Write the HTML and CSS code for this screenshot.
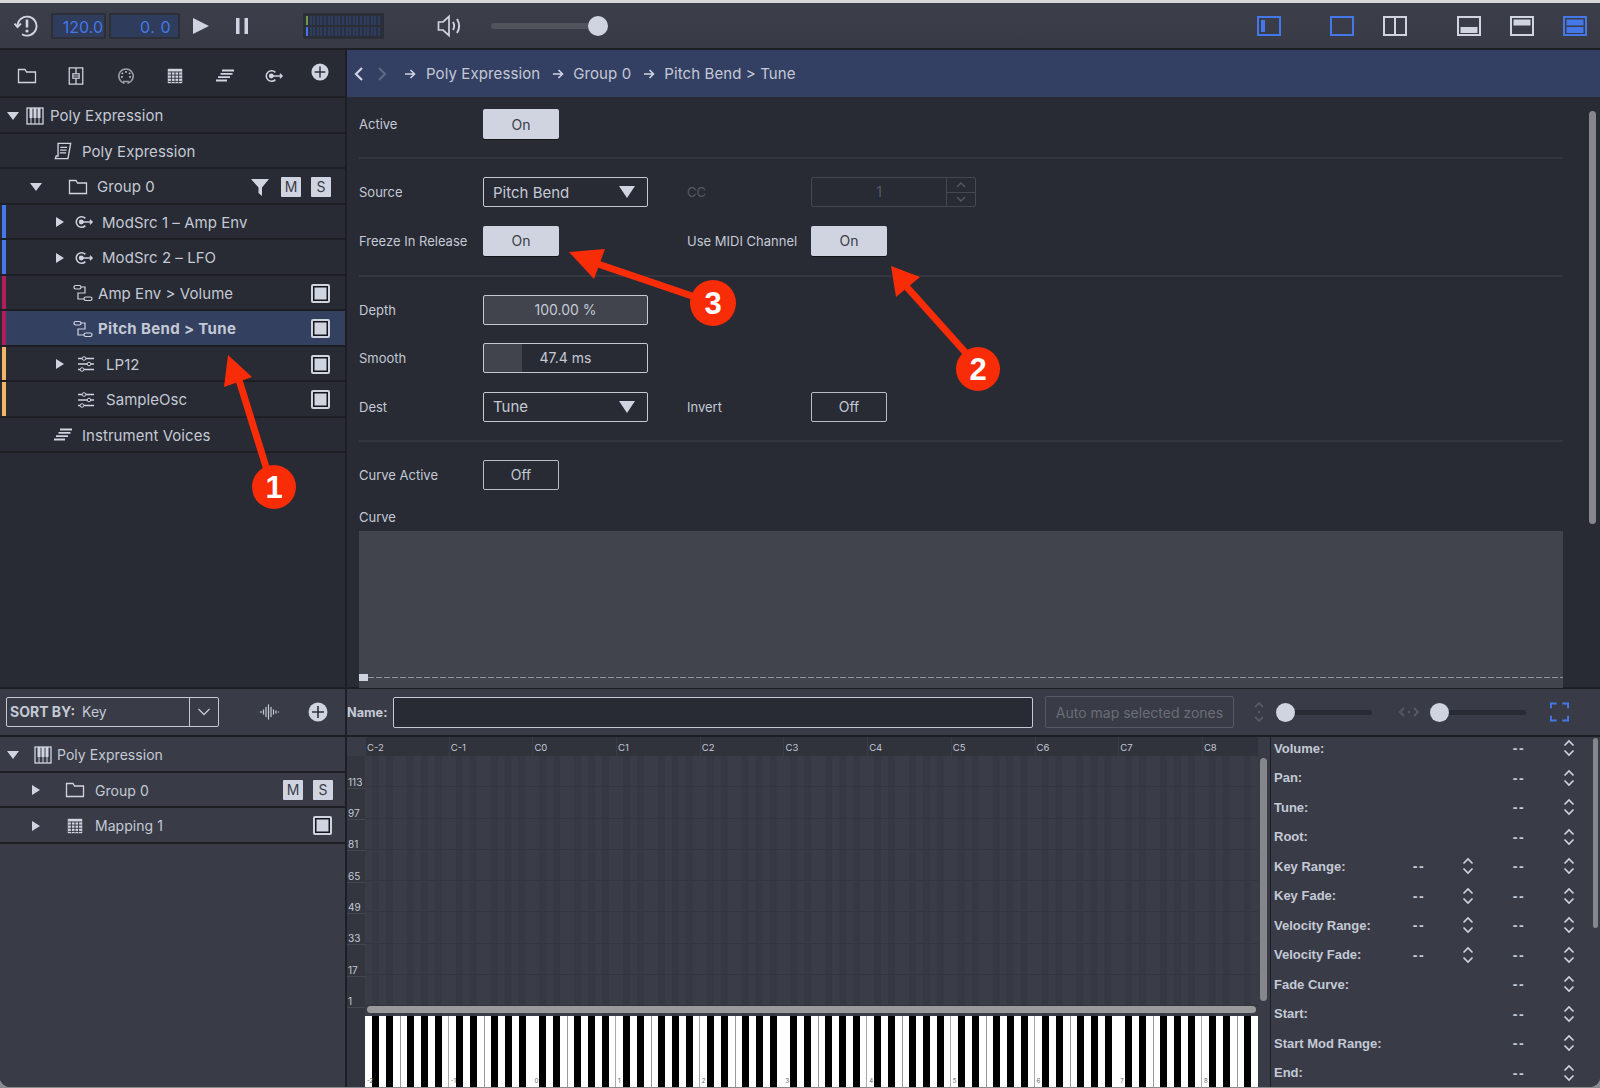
FILE: index.html
```html
<!DOCTYPE html>
<html lang="en">
<head>
    <meta charset="UTF-8">
    <title>Poly Expression</title>
    <link rel="stylesheet" href="styles.css">
</head>
<body>
<svg class="defs" width="0" height="0">
    <symbol id="i-folder" viewBox="0 0 20 16"><path d="M1.500 14.500V1.500H8L9.500 4H18.500V14.500Z" fill="none" stroke="currentColor" stroke-width="1.300"/></symbol>
    <symbol id="i-fader" viewBox="0 0 20 20"><path d="M2.500 1H17.500V19H2.500ZM10 1V7.500M10 12.500V19" fill="none" stroke="currentColor" stroke-width="1.400"/><rect x="6.500" y="7.500" width="7" height="5" fill="none" stroke="currentColor" stroke-width="1.300"/><path d="M6.500 10H13.500" stroke="currentColor"/></symbol>
    <symbol id="i-dial" viewBox="0 0 20 20"><path d="M7.500 17.700A8 8 0 1 1 12.500 17.700V16H7.500Z" fill="none" stroke="#9a9da6" stroke-width="1.700"/><circle cx="10" cy="5.500" r="1" fill="currentColor"/><circle cx="6" cy="7" r="1" fill="currentColor"/><circle cx="14" cy="7" r="1" fill="currentColor"/><circle cx="5.500" cy="11" r="1" fill="currentColor"/><circle cx="14.500" cy="11" r="1" fill="currentColor"/></symbol>
    <symbol id="i-grid" viewBox="0 0 20 20"><rect x="2" y="2" width="16" height="16" fill="currentColor"/><path d="M2.500 5.500H17.500M2.500 9H17.500M2.500 12.500H17.500M2.500 16H17.500M6 5.500V17.500M10 5.500V17.500M14 5.500V17.500" fill="none" stroke="#2e3038" stroke-width="1"/></symbol>
    <symbol id="i-voices" viewBox="0 0 20 14"><path d="M7 1.500H19M5.500 4.800H17.500M3 8.100H15M1 11.500H12" fill="none" stroke="currentColor" stroke-width="1.800"/></symbol>
    <symbol id="i-mod" viewBox="0 0 22 16"><path d="M12.500 4A5.800 5.800 0 1 0 12.500 12" fill="none" stroke="currentColor" stroke-width="1.700"/><circle cx="8" cy="8" r="2.700" fill="currentColor"/><path d="M8 8H20M17.500 5.500L20 8L17.500 10.500" fill="none" stroke="currentColor" stroke-width="1.400"/></symbol>
    <symbol id="i-plus" viewBox="0 0 20 20"><circle cx="10" cy="10" r="9.500" fill="currentColor"/><path d="M10 4V16M4 10H16" stroke="#2e3038" stroke-width="1.600"/></symbol>
    <symbol id="i-piano" viewBox="0 0 18 18"><rect x="1" y="1" width="16" height="16" fill="none" stroke="currentColor" stroke-width="1.300"/><path d="M5 1V17M9 1V17M13 1V17" stroke="currentColor"/><path d="M3.500 1H6.500V11H3.500ZM7.500 1H10.500V11H7.500ZM11.500 1H14.500V11H11.500Z" fill="currentColor"/></symbol>
    <symbol id="i-script" viewBox="0 0 20 20"><path d="M4.500 1.500H18.500L15.500 18.500H1.500L2.500 15.500H4.500ZM7 6H14.500M6.800 9H14M6.500 12H13.500" fill="none" stroke="currentColor" stroke-width="1.500"/></symbol>
    <symbol id="i-filter" viewBox="0 0 18 18"><path d="M0 1H18L11 9.500V18L7.500 15V9.500Z" fill="currentColor"/></symbol>
    <symbol id="i-link" viewBox="0 0 20 18"><rect x="1" y="1.500" width="7" height="3.500" rx="1.700" fill="none" stroke="currentColor" stroke-width="1.200"/><rect x="11" y="13" width="8" height="3.500" rx="1.700" fill="none" stroke="currentColor" stroke-width="1.200"/><path d="M8 3H12V9H5V15H11" fill="none" stroke="currentColor" stroke-width="1.200"/></symbol>
    <symbol id="i-sliders" viewBox="0 0 20 16"><path d="M2 2.500H18M2 8H18M2 13.500H18" stroke="currentColor" stroke-width="1.300"/><circle cx="8" cy="2.500" r="1.800" fill="#282b33" stroke="currentColor"/><circle cx="13" cy="8" r="1.800" fill="#282b33" stroke="currentColor"/><circle cx="6" cy="13.500" r="1.800" fill="#282b33" stroke="currentColor"/></symbol>
    <symbol id="i-wave" viewBox="0 0 20 16"><path d="M1 7V9M3.500 5.500V10.500M6 3V13M8.500 0.500V15.500M11 3V13M13.500 5.500V10.500M16 6.500V9.500M18.500 7.500V8.500" stroke="currentColor" stroke-width="1.200"/></symbol>
    <symbol id="i-step" viewBox="0 0 12 18"><path d="M1.500 6.500L6 2L10.500 6.500M1.500 11.500L6 16L10.500 11.500" fill="none" stroke="currentColor" stroke-width="1.600"/></symbol>
    <symbol id="i-arrow" viewBox="0 0 12 12"><path d="M1 6H10.500M6.500 2L10.500 6L6.500 10" fill="none" stroke="currentColor" stroke-width="1.600"/></symbol>
</svg>

<div class="app">
    <div class="topline"></div>

    <div class="toolbar">
        <svg class="tb-history" viewBox="0 0 24 24"><path d="M3.500 12A9.500 9.500 0 1 1 8 20.200" fill="none" stroke="currentColor" stroke-width="1.900"/><path d="M0.500 9.500L3.500 13L7 9.500" fill="none" stroke="currentColor" stroke-width="1.900"/><path d="M13 5.500V13.500" stroke="currentColor" stroke-width="2.600"/><circle cx="13" cy="17" r="1.600" fill="currentColor"/></svg>
        <div class="num-box tb-bpm">120.0</div>
        <div class="num-box tb-pos">0. 0</div>
        <svg class="tb-play" viewBox="0 0 16 16"><path d="M0 0L16 8L0 16Z" fill="currentColor"/></svg>
        <svg class="tb-pause" viewBox="0 0 14 16"><path d="M1 0H4.500V16H1ZM9.500 0H13V16H9.500Z" fill="currentColor"/></svg>
        <div class="meter"><div class="meter-row meter-top"></div><div class="meter-row meter-bottom"></div></div>
        <svg class="tb-speaker" viewBox="0 0 26 24"><path d="M1.500 8H6L12 2.500V21.500L6 16H1.500Z" fill="none" stroke="currentColor" stroke-width="1.700"/><path d="M16 8C17.500 10.500 17.500 13.500 16 16M20 5C22.800 9.500 22.800 14.500 20 19" fill="none" stroke="currentColor" stroke-width="1.900"/></svg>
        <div class="tb-volume"><div class="knob"></div></div>

        <svg class="layout tb-l1" viewBox="0 0 24 20"><rect x="1" y="1" width="22" height="18" fill="none" stroke="#4478e8" stroke-width="2"/><rect x="4" y="4" width="4" height="12" fill="#4478e8"/></svg>
        <svg class="layout tb-l2" viewBox="0 0 24 20"><rect x="1" y="1" width="22" height="18" fill="none" stroke="#4478e8" stroke-width="2"/></svg>
        <svg class="layout tb-l3" viewBox="0 0 24 20"><path d="M1 1H23V19H1ZM12 1V19" fill="none" stroke="#d0d4e1" stroke-width="2"/></svg>
        <svg class="layout tb-l4" viewBox="0 0 24 20"><rect x="1" y="1" width="22" height="18" fill="none" stroke="#d0d4e1" stroke-width="2"/><rect x="3.500" y="11" width="17" height="6" fill="#d0d4e1"/></svg>
        <svg class="layout tb-l5" viewBox="0 0 24 20"><rect x="1" y="1" width="22" height="18" fill="none" stroke="#d0d4e1" stroke-width="2"/><rect x="3.500" y="3.500" width="17" height="6" fill="#d0d4e1"/></svg>
        <svg class="layout tb-l6" viewBox="0 0 24 20"><rect x="1" y="1" width="22" height="18" fill="none" stroke="#4478e8" stroke-width="2"/><rect x="3.500" y="3.500" width="17" height="6" fill="#4478e8"/><rect x="3.500" y="11" width="17" height="6" fill="#4478e8"/></svg>
    </div>

    <div class="upper">
        <div class="side">
            <div class="side-icons">
                <svg class="si"><use href="#i-folder"/></svg>
                <svg class="si"><use href="#i-fader"/></svg>
                <svg class="si"><use href="#i-dial"/></svg>
                <svg class="si"><use href="#i-grid"/></svg>
                <svg class="si"><use href="#i-voices"/></svg>
                <svg class="si"><use href="#i-mod"/></svg>
                <svg class="si si-plus"><use href="#i-plus"/></svg>
            </div>
            <div class="row k-root"><span class="tw tw-down"></span><svg class="ico"><use href="#i-piano"/></svg><span class="name">Poly Expression</span></div>
            <div class="row k-file"><svg class="ico"><use href="#i-script"/></svg><span class="name">Poly Expression</span></div>
            <div class="row k-group"><span class="tw tw-down"></span><svg class="ico"><use href="#i-folder"/></svg><span class="name">Group 0</span><svg class="filter"><use href="#i-filter"/></svg><span class="ms ms-m">M</span><span class="ms ms-s">S</span></div>
            <div class="row k-mod lane-blue"><span class="tw"></span><svg class="ico"><use href="#i-mod"/></svg><span class="name">ModSrc 1 – Amp Env</span></div>
            <div class="row k-mod lane-blue"><span class="tw"></span><svg class="ico"><use href="#i-mod"/></svg><span class="name">ModSrc 2 – LFO</span></div>
            <div class="row k-link lane-red"><svg class="ico"><use href="#i-link"/></svg><span class="name">Amp Env &gt; Volume</span><span class="toggle"></span></div>
            <div class="row k-link lane-red-sel"><svg class="ico"><use href="#i-link"/></svg><span class="name name-sel">Pitch Bend &gt; Tune</span><span class="toggle"></span></div>
            <div class="row k-proc lane-orange"><span class="tw"></span><svg class="ico"><use href="#i-sliders"/></svg><span class="name">LP12</span><span class="toggle"></span></div>
            <div class="row k-proc-leaf lane-orange"><svg class="ico"><use href="#i-sliders"/></svg><span class="name">SampleOsc</span><span class="toggle"></span></div>
            <div class="row k-file"><svg class="ico"><use href="#i-voices"/></svg><span class="name">Instrument Voices</span></div>
        </div>

        <div class="main">
            <div class="crumbs">
                <svg class="chev" viewBox="0 0 10 14"><path d="M8 1L2 7L8 13" fill="none" stroke="currentColor" stroke-width="2.200"/></svg>
                <svg class="chev chev-off" viewBox="0 0 10 14"><path d="M2 1L8 7L2 13" fill="none" stroke="currentColor" stroke-width="2.200"/></svg>
                <svg class="crumb-arrow crumb-first"><use href="#i-arrow"/></svg>
                <span class="crumb">Poly Expression</span>
                <svg class="crumb-arrow"><use href="#i-arrow"/></svg>
                <span class="crumb">Group 0</span>
                <svg class="crumb-arrow"><use href="#i-arrow"/></svg>
                <span class="crumb">Pitch Bend &gt; Tune</span>
            </div>

            <div class="form">
                <div class="section section-first">
                    <div class="form-row"><label>Active</label><button class="btn on">On</button></div>
                </div>
                <div class="section">
                    <div class="form-row">
                        <label>Source</label>
                        <div class="select">Pitch Bend<span class="caret"></span></div>
                        <label class="label-2 label-off">CC</label>
                        <div class="spinner"><span class="spin-val">1</span><div class="spin-btns"><span class="spin-up"><svg viewBox="0 0 12 8"><path d="M2 6L6 2L10 6" fill="none" stroke="currentColor" stroke-width="1.300"/></svg></span><span class="spin-down"><svg viewBox="0 0 12 8"><path d="M2 2L6 6L10 2" fill="none" stroke="currentColor" stroke-width="1.300"/></svg></span></div></div>
                    </div>
                    <div class="form-row">
                        <label>Freeze In Release</label>
                        <button class="btn on">On</button>
                        <label class="label-2 label-after-btn">Use MIDI Channel</label>
                        <button class="btn on">On</button>
                    </div>
                </div>
                <div class="section section-values">
                    <div class="form-row"><label>Depth</label><div class="value value-full">100.00 %</div></div>
                    <div class="form-row"><label>Smooth</label><div class="value value-part"><span>47.4 ms</span></div></div>
                    <div class="form-row">
                        <label>Dest</label>
                        <div class="select">Tune<span class="caret"></span></div>
                        <label class="label-2">Invert</label>
                        <button class="btn off">Off</button>
                    </div>
                </div>
                <div class="section section-last">
                    <div class="form-row"><label>Curve Active</label><button class="btn off">Off</button></div>
                </div>
                <div class="curve-label">Curve</div>
                <div class="curve"><div class="curve-line"><span class="curve-handle"></span><span class="curve-dash"></span></div></div>
                <div class="scroll-main"></div>
            </div>
        </div>
    </div>

    <div class="lower">
        <div class="side side-low">
            <div class="sort-bar">
                <div class="sort-box">
                    <span class="sort-text"><b>SORT BY:</b> Key</span>
                    <span class="sort-drop"><svg viewBox="0 0 14 8"><path d="M1.500 1L7 6.500L12.500 1" fill="none" stroke="currentColor" stroke-width="1.300"/></svg></span>
                </div>
                <svg class="sort-wave"><use href="#i-wave"/></svg>
                <svg class="sort-plus"><use href="#i-plus"/></svg>
            </div>
            <div class="row k-low"><span class="tw tw-down"></span><svg class="ico"><use href="#i-piano"/></svg><span class="name">Poly Expression</span></div>
            <div class="row k-low-child"><span class="tw"></span><svg class="ico"><use href="#i-folder"/></svg><span class="name">Group 0</span><span class="ms ms-m">M</span><span class="ms ms-s">S</span></div>
            <div class="row k-low-child"><span class="tw"></span><svg class="ico"><use href="#i-grid"/></svg><span class="name">Mapping 1</span><span class="toggle"></span></div>
        </div>

        <div class="zones">
            <div class="zone-bar">
                <label class="zone-name">Name:</label>
                <div class="name-input"></div>
                <div class="auto-map">Auto map selected zones</div>
                <svg class="zoom-v" viewBox="0 0 12 22"><path d="M2 6L6 2L10 6M2 16L6 20L10 16" fill="none" stroke="currentColor" stroke-width="1.800"/><circle cx="6" cy="11" r="1.200" fill="currentColor"/></svg>
                <div class="mini-slider"><div class="knob knob-small"></div></div>
                <svg class="zoom-h" viewBox="0 0 22 12"><path d="M6 2L2 6L6 10M16 2L20 6L16 10" fill="none" stroke="currentColor" stroke-width="1.800"/><circle cx="11" cy="6" r="1.200" fill="currentColor"/></svg>
                <div class="mini-slider"><div class="knob knob-small"></div></div>
                <svg class="full" viewBox="0 0 20 20"><path d="M1 6V1H7M13 1H19V6M19 14V19H13M7 19H1V14" fill="none" stroke="#4478e8" stroke-width="2"/></svg>
            </div>

            <div class="zone-body">
                <div class="matrix">
                    <div class="ruler">
                        <span>C-2</span><span>C-1</span><span>C0</span><span>C1</span><span>C2</span><span>C3</span><span>C4</span><span>C5</span><span>C6</span><span>C7</span><span>C8</span>
                    </div>
                    <div class="matrix-mid">
                        <div class="axis">
                            <span>113</span><span>97</span><span>81</span><span>65</span><span>49</span><span>33</span><span>17</span><span>1</span>
                        </div>
                        <div class="lanes"><div class="hscroll"></div></div>
                    </div>
                    <div class="keys-row">
                        <div class="keys">
                            <div class="octave"><span>-2</span></div><div class="octave"><span>-1</span></div><div class="octave"><span>0</span></div><div class="octave"><span>1</span></div><div class="octave"><span>2</span></div><div class="octave"><span>3</span></div><div class="octave"><span>4</span></div><div class="octave"><span>5</span></div><div class="octave"><span>6</span></div><div class="octave"><span>7</span></div><div class="octave"><span>8</span></div>
                        </div>
                    </div>
                </div>
                <div class="matrix-scroll"><div class="vscroll"></div></div>

                <div class="props">
                    <div class="prop"><b>Volume:</b><span class="d2">--</span><svg class="s2"><use href="#i-step"/></svg></div>
                    <div class="prop"><b>Pan:</b><span class="d2">--</span><svg class="s2"><use href="#i-step"/></svg></div>
                    <div class="prop"><b>Tune:</b><span class="d2">--</span><svg class="s2"><use href="#i-step"/></svg></div>
                    <div class="prop"><b>Root:</b><span class="d2">--</span><svg class="s2"><use href="#i-step"/></svg></div>
                    <div class="prop"><b>Key Range:</b><span class="d1">--</span><svg class="s1"><use href="#i-step"/></svg><span class="d2">--</span><svg class="s2"><use href="#i-step"/></svg></div>
                    <div class="prop"><b>Key Fade:</b><span class="d1">--</span><svg class="s1"><use href="#i-step"/></svg><span class="d2">--</span><svg class="s2"><use href="#i-step"/></svg></div>
                    <div class="prop"><b>Velocity Range:</b><span class="d1">--</span><svg class="s1"><use href="#i-step"/></svg><span class="d2">--</span><svg class="s2"><use href="#i-step"/></svg></div>
                    <div class="prop"><b>Velocity Fade:</b><span class="d1">--</span><svg class="s1"><use href="#i-step"/></svg><span class="d2">--</span><svg class="s2"><use href="#i-step"/></svg></div>
                    <div class="prop"><b>Fade Curve:</b><span class="d2">--</span><svg class="s2"><use href="#i-step"/></svg></div>
                    <div class="prop"><b>Start:</b><span class="d2">--</span><svg class="s2"><use href="#i-step"/></svg></div>
                    <div class="prop"><b>Start Mod Range:</b><span class="d2">--</span><svg class="s2"><use href="#i-step"/></svg></div>
                    <div class="prop"><b>End:</b><span class="d2">--</span><svg class="s2"><use href="#i-step"/></svg></div>
                    <div class="scroll-props"></div>
                </div>
            </div>
        </div>
    </div>

    <svg class="notes" viewBox="0 0 1600 1088">
        <g class="note">
            <line x1="267" y1="470" x2="239" y2="380"/>
            <polygon points="228,355 224,387 252,377"/>
            <circle cx="274" cy="487" r="22"/>
            <text x="274" y="498">1</text>
        </g>
        <g class="note">
            <line x1="965" y1="352" x2="905" y2="285"/>
            <polygon points="891,266 896,297 920,277"/>
            <circle cx="978" cy="369" r="22"/>
            <text x="978" y="380">2</text>
        </g>
        <g class="note">
            <line x1="695" y1="297" x2="598" y2="264"/>
            <polygon points="569,252 594,279 605,249"/>
            <circle cx="713" cy="303" r="23"/>
            <text x="713" y="314">3</text>
        </g>
    </svg>
</div>
</body>
</html>
```

FILE: styles.css
```css
* {
    margin: 0;
    padding: 0;
    box-sizing: border-box;
}

body {
    width: 1600px;
    height: 1088px;
    overflow: hidden;
    background-color: #8a8c90;
    font-family: Inter, "Liberation Sans", sans-serif;
    color: #c4c9d6;
}

.defs {
    position: absolute;
}

.app {
    position: relative;
    display: flex;
    flex-direction: column;
    width: 1600px;
    height: 1087px;
    overflow: hidden;
    background-color: #282b33;
    border-radius: 0 0 10px 10px;
}

.topline {
    height: 3px;
    background-color: #d8d8d8;
}

/* top toolbar */
.toolbar {
    display: flex;
    align-items: center;
    flex: none;
    height: 47px;
    background: linear-gradient(#3c3f49, #383b45);
    border-bottom: 2px solid #1d1f25;
    color: #d0d4e1;
}

.tb-history { width: 24px; height: 24px; margin-left: 14px; }

.num-box {
    height: 26px;
    line-height: 25px;
    background-color: #2f3c5c;
    border: 2px solid #2c2f38;
    color: #4478e8;
    font-size: 16px;
    text-align: right;
    padding-right: 1px;
}

.tb-bpm { width: 55px; margin-left: 13px; }
.tb-pos { width: 71px; margin-left: 3px; padding-right: 7px; letter-spacing: 0.500px; }
.tb-play { width: 16px; height: 16px; margin-left: 13px; }
.tb-pause { width: 14px; height: 16px; margin-left: 26px; }

.meter {
    display: flex;
    flex-direction: column;
    justify-content: center;
    gap: 2px;
    width: 81px;
    height: 26px;
    margin-left: 54px;
    padding: 0 3px;
    background-color: #2b2e36;
}

.meter-row {
    height: 9px;
    background: repeating-linear-gradient(90deg, #2f3c5c 0 2px, #283042 2px 3.600px);
}

.meter-top { box-shadow: inset 2px 0 0 #6f9a4b; }
.meter-bottom { box-shadow: inset 2px 0 0 #4478e8; }

.tb-speaker { width: 26px; height: 24px; margin-left: 53px; }

.tb-volume {
    display: flex;
    align-items: center;
    justify-content: flex-end;
    width: 117px;
    height: 6px;
    margin-left: 28px;
    background-color: #50535c;
    border-radius: 3px;
}

.knob {
    flex: none;
    width: 20px;
    height: 20px;
    border-radius: 50%;
    background-color: #d0d4e1;
}

.layout { width: 24px; height: 20px; }
.tb-l1 { margin-left: 649px; }
.tb-l2 { margin-left: 49px; }
.tb-l3 { margin-left: 29px; }
.tb-l4 { margin-left: 50px; }
.tb-l5 { margin-left: 29px; }
.tb-l6 { margin-left: 29px; }

.upper {
    display: flex;
    flex: none;
    height: 639px;
    border-bottom: 2px solid #1d1f25;
}

.side {
    flex: none;
    width: 347px;
    border-right: 2px solid #1d1f25;
}

.side-icons {
    position: relative;
    display: grid;
    grid-template-columns: repeat(7, 49.500px);
    align-items: center;
    justify-items: center;
    height: 48px;
    padding-left: 2px;
    border-bottom: 2px solid #1d1f25;
    color: #d0d4e1;
}

.si { width: 20px; height: 18px; margin-top: 5px; }
.si-plus { margin: -2px 7px 0 0; }

/* tree rows */
.row {
    display: flex;
    align-items: center;
    height: 35.500px;
    padding-top: 2px;
    border-bottom: 2px solid #1d1f25;
    font-size: 15px;
    letter-spacing: 0.050px;
    color: #c4c9d6;
}

.tw {
    flex: none;
    width: 0;
    height: 0;
    border-style: solid;
    border-width: 5.500px 0 5.500px 8px;
    border-color: transparent transparent transparent #d0d4e1;
}

.tw-down {
    border-width: 8px 6px 0 6px;
    border-color: #d0d4e1 transparent transparent transparent;
}

.ico {
    flex: none;
    width: 20px;
    height: 18px;
    color: #d0d4e1;
}

.name { white-space: nowrap; }
.name-sel { font-weight: 700; letter-spacing: 0.350px; }

.k-root .tw { margin-left: 7px; }
.k-root .ico { margin-left: 6px; }
.k-root .name { margin-left: 5px; }

.k-file .ico { margin-left: 53px; }
.k-file .name { margin-left: 9px; }

.k-group .tw { margin-left: 30px; }
.k-group .ico { margin-left: 26px; }
.k-group .name { margin-left: 9px; }

.k-mod .tw { margin-left: 56px; }
.k-mod .ico { margin-left: 10px; }
.k-mod .name { margin-left: 8px; }

.k-link .ico { margin-left: 73px; }
.k-link .name { margin-left: 5px; }

.k-proc .tw { margin-left: 56px; }
.k-proc .ico { margin-left: 12px; }
.k-proc .name { margin-left: 10px; }

.k-proc-leaf .ico { margin-left: 76px; }
.k-proc-leaf .name { margin-left: 10px; }

.side-low .row { font-size: 14px; }

.k-low .tw { margin-left: 7px; }
.k-low .ico { margin-left: 14px; }
.k-low .name { margin-left: 4px; }

.k-low-child .tw { margin-left: 32px; }
.k-low-child .ico { margin-left: 25px; }
.k-low-child .name { margin-left: 10px; }

.lane-blue { background-image: linear-gradient(90deg, transparent 2px, #4478e8 2px, #4478e8 6px, transparent 6px); }
.lane-red { background-image: linear-gradient(90deg, transparent 2px, #b01f5c 2px, #b01f5c 6px, transparent 6px); }
.lane-red-sel { background-image: linear-gradient(90deg, #282b33 2px, #b01f5c 2px, #b01f5c 6px, #33405f 6px); }
.lane-orange { background-image: linear-gradient(90deg, transparent 2px, #f2b469 2px, #f2b469 6px, transparent 6px); }

.filter {
    width: 18px;
    height: 18px;
    margin-left: auto;
    color: #d0d4e1;
}

.ms {
    flex: none;
    width: 20px;
    height: 20px;
    line-height: 20px;
    border-radius: 1px;
    background-color: #d0d4e1;
    color: #3a3d47;
    font-size: 14px;
    text-align: center;
}

.ms-m { margin-left: 12px; }
.ms-s { margin-left: 10px; margin-right: 14px; }
.k-low-child .ms-m { margin-left: auto; }
.k-low-child .ms-s { margin-right: 12px; }

.toggle {
    flex: none;
    width: 19px;
    height: 19px;
    margin-left: auto;
    margin-right: 15px;
    border: 2px solid #d0d4e1;
    border-radius: 2px;
    background-color: #d0d4e1;
    box-shadow: inset 0 0 0 1.500px #15171b;
}

.k-low-child .toggle { margin-right: 13px; }

/* right hand editor */
.main {
    flex: 1;
    min-width: 0;
}

.crumbs {
    display: flex;
    align-items: center;
    height: 47px;
    padding-left: 7px;
    background-color: #334063;
    font-size: 15px;
    letter-spacing: 0.100px;
    color: #c4c9d6;
}

.chev { width: 10px; height: 14px; color: #d0d4e1; }
.chev-off { margin-left: 13px; color: #5d6780; }

.crumb-arrow {
    width: 12px;
    height: 12px;
    margin-left: 12px;
    margin-right: 9px;
    color: #d0d4e1;
}

.crumb-first { margin-left: 17px; margin-right: 10px; }

.form {
    position: relative;
    height: 590px;
    padding: 0 37px 0 12px;
    font-size: 13px;
}

.section {
    display: flex;
    flex-direction: column;
    gap: 18.500px;
    padding: 18px 0 19px;
    border-bottom: 2px solid #33363f;
}

.section-first { padding-top: 12px; padding-bottom: 18px; }
.section-values { padding-bottom: 18px; }
.section-last { padding-bottom: 0; border-bottom: none; }

.form-row {
    display: flex;
    align-items: center;
    height: 30px;
}

.form-row label {
    flex: none;
    width: 124px;
}

.form-row .label-2 {
    width: 124px;
    margin-left: 39px;
}

.form-row .label-after-btn { margin-left: 128px; }
.form-row .label-off { color: #555963; }

.btn {
    flex: none;
    width: 76px;
    height: 30px;
    border-radius: 2px;
    font-family: inherit;
    font-size: 14px;
}

.on {
    border: none;
    background-color: #d0d4e1;
    color: #3a3d47;
    box-shadow: 0 1px 0 #15171b;
}

.off {
    border: 1.500px solid #b9bdc9;
    background-color: transparent;
    color: #c4c9d6;
}

.select {
    display: flex;
    align-items: center;
    justify-content: space-between;
    width: 165px;
    height: 30px;
    padding: 0 12px 0 9px;
    border: 1.500px solid #c4c9d6;
    border-radius: 2px;
    font-size: 15px;
}

.caret {
    width: 0;
    height: 0;
    border-style: solid;
    border-width: 12px 8px 0 8px;
    border-color: #d0d4e1 transparent transparent transparent;
}

.spinner {
    display: flex;
    width: 165px;
    height: 30px;
    border: 1.500px solid #454852;
    border-radius: 2px;
    color: #555963;
    font-size: 14px;
}

.spin-val {
    flex: 1;
    line-height: 27px;
    text-align: center;
}

.spin-btns {
    display: flex;
    flex-direction: column;
    width: 29px;
    border-left: 1.500px solid #454852;
}

.spin-btns span {
    flex: 1;
    display: flex;
    align-items: center;
    justify-content: center;
}

.spin-btns svg { width: 12px; height: 8px; }
.spin-up { border-bottom: 1.500px solid #454852; }

.value {
    width: 165px;
    height: 30px;
    line-height: 28px;
    border: 1.500px solid #c4c9d6;
    border-radius: 2px;
    font-size: 14px;
    text-align: center;
}

.value-full { background-color: #41444d; }
.value-part { background: linear-gradient(90deg, #41444d 38px, transparent 38px); }

.curve-label {
    margin-top: 17px;
    height: 24px;
    line-height: 20px;
}

.curve {
    display: flex;
    align-items: flex-end;
    height: 157px;
    padding-bottom: 7px;
    background-color: #41444d;
}

.curve-line {
    display: flex;
    align-items: center;
    width: 100%;
}

.curve-handle {
    flex: none;
    width: 9px;
    height: 7px;
    background-color: #d0d4e1;
}

.curve-dash {
    flex: 1;
    height: 1px;
    background: repeating-linear-gradient(90deg, #8f929a 0 6px, transparent 6px 8px);
}

.scroll-main {
    position: absolute;
    top: 14px;
    right: 4px;
    width: 7px;
    height: 413px;
    border-radius: 4px;
    background-color: #85878c;
}

/* lower half */
.lower {
    display: flex;
    flex: 1;
    min-height: 0;
    background-color: #393c46;
}

.side-low {
    background-color: #393c46;
}

.sort-bar {
    display: flex;
    align-items: center;
    height: 48px;
    padding-left: 6px;
    border-bottom: 2px solid #1d1f25;
}

.sort-box {
    display: flex;
    align-items: stretch;
    width: 213px;
    height: 30px;
    border: 1.500px solid #c4c9d6;
    border-radius: 2px;
    font-size: 14px;
}

.sort-text {
    flex: 1;
    line-height: 27px;
    padding-left: 3px;
}

.sort-text b { margin-right: 3px; }

.sort-drop {
    display: flex;
    align-items: center;
    justify-content: center;
    width: 29px;
    border-left: 1.500px solid #c4c9d6;
}

.sort-drop svg { width: 14px; height: 8px; }
.sort-wave { width: 20px; height: 16px; margin-left: 41px; color: #c4c9d6; }
.sort-plus { width: 20px; height: 20px; margin-left: 28px; color: #d0d4e1; }

.zones {
    display: flex;
    flex-direction: column;
    flex: 1;
    min-width: 0;
}

.zone-bar {
    display: flex;
    align-items: center;
    flex: none;
    height: 48px;
    border-bottom: 2px solid #1d1f25;
}

.zone-name {
    width: 46px;
    font-size: 12.700px;
    font-weight: 700;
}

.name-input {
    width: 640px;
    height: 31px;
    border: 1.500px solid #c4c9d6;
    border-radius: 2px;
    background-color: #282b33;
}

.auto-map {
    width: 189px;
    height: 32px;
    line-height: 31px;
    margin-left: 12px;
    border: 1.500px solid #555963;
    border-radius: 2px;
    color: #6a6d77;
    font-size: 14px;
    text-align: center;
}

.zoom-v { width: 12px; height: 22px; margin-left: 19px; color: #555963; }
.zoom-h { width: 22px; height: 12px; margin-left: 26px; color: #555963; }

.mini-slider {
    display: flex;
    align-items: center;
    width: 96px;
    height: 5px;
    margin-left: 11px;
    border-radius: 3px;
    background-color: #282b33;
}

.zoom-h + .mini-slider { margin-left: 10px; }
.knob-small { width: 19px; height: 19px; }
.full { width: 19px; height: 20px; margin-left: 24px; }

.zone-body {
    display: flex;
    flex: 1;
    min-height: 0;
}

.matrix {
    display: flex;
    flex-direction: column;
    flex: none;
    width: 911px;
}

.ruler {
    display: flex;
    flex: none;
    height: 19px;
    padding-left: 18px;
    overflow: hidden;
}

.ruler span {
    flex: none;
    width: 83.700px;
    padding: 5px 0 0 1px;
    border-left: 1px solid #393c46;
    background-color: #30333c;
    font-size: 9.500px;
}

.matrix-mid {
    display: flex;
    flex: none;
    height: 260px;
}

.axis {
    display: flex;
    flex-direction: column;
    flex: none;
    width: 18px;
    padding-top: 1.500px;
    background-color: #33363f;
}

.axis span {
    display: flex;
    align-items: flex-end;
    flex: none;
    height: 31.300px;
    padding: 0 0 0 1px;
    border-bottom: 1px solid #44474f;
    font-size: 10px;
}

.lanes {
    position: relative;
    flex: 1;
    background-color: #3a3d47;
    background-image:
        repeating-linear-gradient(180deg, transparent 0 30.300px, #33363f 30.300px 31.300px),
        linear-gradient(90deg, #3a3d47 0 7px, #363943 7px 14px, #3a3d47 14px 21px, #363943 21px 28px, #3a3d47 28px 42px, #363943 42px 49px, #3a3d47 49px 56px, #363943 56px 63px, #3a3d47 63px 70px, #363943 70px 77px, #3a3d47 77px 83.700px);
    background-size: 100% 100%, 83.700px 100%;
}

.hscroll {
    position: absolute;
    left: 2px;
    right: 2px;
    bottom: 3px;
    height: 7px;
    border-radius: 4px;
    background-color: #9a9a9c;
}

.keys-row {
    display: flex;
    flex: 1;
    padding-left: 18px;
    background-color: #33363f;
}

.keys {
    display: flex;
    width: 893px;
    overflow: hidden;
}

.octave {
    position: relative;
    flex: none;
    width: 83.700px;
    background: linear-gradient(90deg, #fff 0 7.300px, #000 7.300px 14.300px, #fff 14.300px 21px, #000 21px 28.300px, #fff 28.300px 35px, #999 35px 35.700px, #fff 35.700px 41.700px, #000 41.700px 49.300px, #fff 49.300px 56px, #000 56px 63.300px, #fff 63.300px 70px, #000 70px 77.300px, #fff 77.300px 83px, #aaa 83px 83.700px);
}

.octave span {
    position: absolute;
    left: 2px;
    bottom: 3px;
    font-size: 6px;
    color: #666;
}

.matrix-scroll {
    flex: none;
    width: 12px;
    padding: 21px 0 0 2px;
    background-color: #393c46;
}

.vscroll {
    width: 7px;
    height: 243px;
    border-radius: 4px;
    background-color: #85878c;
}

.props {
    position: relative;
    flex: 1;
    padding: 0 0 0 3px;
    border-left: 1px solid #1d1f25;
    overflow: hidden;
}

.prop {
    display: grid;
    grid-template-columns: 131px 28px 25px 20px 27px 28px 26px 20px;
    align-items: center;
    height: 29.500px;
    color: #c4c9d6;
    font-family: "Liberation Sans", sans-serif;
    font-size: 13px;
}

.prop:first-child { margin-top: -3.500px; }
.prop b { grid-column: 1; white-space: nowrap; }

.d1, .d2 {
    font-size: 14px;
    font-weight: 700;
    letter-spacing: 1.500px;
    text-align: center;
}

.d1 { grid-column: 2; }
.d2 { grid-column: 6; }

.s1, .s2 {
    justify-self: center;
    width: 12px;
    height: 18px;
    color: #d0d4e1;
}

.s1 { grid-column: 4; }
.s2 { grid-column: 8; }

.scroll-props {
    position: absolute;
    top: 1px;
    right: 2px;
    width: 5px;
    height: 190px;
    border-radius: 3px;
    background-color: #85878c;
}

/* annotation arrows drawn on top of the screenshot */
.notes {
    position: absolute;
    top: 0;
    left: 0;
    width: 1600px;
    height: 1088px;
    pointer-events: none;
}

.note line {
    stroke: #f92c08;
    stroke-width: 7;
}

.note polygon,
.note circle {
    fill: #f92c08;
}

.note text {
    fill: #fff;
    font-family: "Liberation Sans", sans-serif;
    font-size: 31px;
    font-weight: 700;
    text-anchor: middle;
}
```
